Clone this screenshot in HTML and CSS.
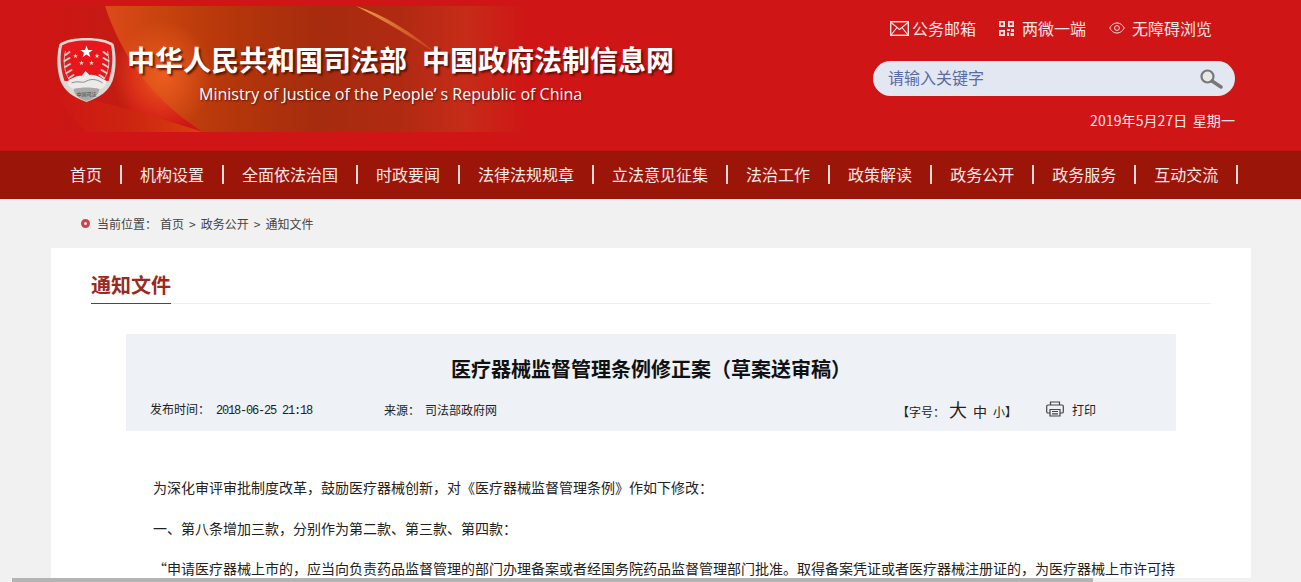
FILE: index.html
```html
<!DOCTYPE html>
<html lang="zh-CN">
<head>
    <meta charset="UTF-8">
    <meta name="viewport" content="width=device-width, initial-scale=1.0">
    <title>医疗器械监督管理条例修正案&#xFF08;草案送审稿&#xFF09;</title>
    <link rel="stylesheet" href="styles.css">
</head>
<body>
    <header class="top">
        <svg class="banner" viewBox="0 0 530 126" width="530" height="126" aria-hidden="true">
            <defs>
                <linearGradient id="bannerGlow" x1="0" x2="1" y1="0" y2="0">
                    <stop offset="0" stop-color="#dc4a1a"/>
                    <stop offset="0.12" stop-color="#c9440f"/>
                    <stop offset="0.3" stop-color="#b4360a"/>
                    <stop offset="0.5" stop-color="#a62c0e"/>
                    <stop offset="0.7" stop-color="#b02a12"/>
                    <stop offset="0.85" stop-color="#c62c18"/>
                    <stop offset="1" stop-color="#cf1515"/>
                </linearGradient>
                <linearGradient id="bannerLow" x1="0" x2="1" y1="0" y2="0">
                    <stop offset="0" stop-color="#cf1515"/>
                    <stop offset="0.5" stop-color="#cc2410"/>
                    <stop offset="1" stop-color="#d8400e"/>
                </linearGradient>
                <linearGradient id="bannerStreak" x1="0" x2="1" y1="0" y2="0">
                    <stop offset="0" stop-color="#eea04a"/>
                    <stop offset="1" stop-color="#c23416"/>
                </linearGradient>
                <radialGradient id="bannerHot" cx="0.5" cy="0.5" r="0.5">
                    <stop offset="0" stop-color="#ec5c1e"/>
                    <stop offset="1" stop-color="#ec5c1e" stop-opacity="0"/>
                </radialGradient>
                <linearGradient id="bannerLeft" x1="0" x2="1" y1="0" y2="0">
                    <stop offset="0" stop-color="#cf1515"/>
                    <stop offset="1" stop-color="#c21c12"/>
                </linearGradient>
            </defs>
            <rect width="90" height="126" fill="url(#bannerLeft)"/>
            <path d="M67 0C85 55 120 98 165 126H490V0Z" fill="url(#bannerGlow)"/>
            <ellipse cx="125" cy="70" rx="50" ry="55" fill="url(#bannerHot)"/>
            <path d="M10 84C60 94 115 110 165 126H48Z" fill="url(#bannerLow)"/>
            <path d="M318 0C345 8 372 25 402 50C375 32 345 14 318 0Z" fill="url(#bannerStreak)"/>
        </svg>

        <div class="brand">
            <svg class="emblem" viewBox="0 0 60 66" width="61" height="66" aria-hidden="true">
                <defs>
                    <polygon id="star" points="0,-5 1.2,-1.6 4.8,-1.6 1.9,.6 3,4 0,2 -3,4 -1.9,.6 -4.8,-1.6 -1.2,-1.6"/>
                </defs>
                <path d="M30 1C42 1 52 3 57 7C60 18 60 32 56 44C52 54 44 60 30 65C16 60 8 54 4 44C0 32 0 18 3 7C8 3 18 1 30 1Z" fill="#dcd8d4"/>
                <path d="M30 3.5C41 3.5 50 5.5 54.5 8.5C57 20 56 32 52 44H8C4 32 3 20 5.5 8.5C10 5.5 19 3.5 30 3.5Z" fill="#e8171c"/>
                <use href="#star" x="30" y="15" fill="#fff" transform="translate(-9 -4.5) scale(1.3)"/>
                <use href="#star" x="19" y="19" fill="#fbe9d0" transform="translate(9.5 9.5) scale(.5)"/>
                <use href="#star" x="81" y="19" fill="#fbe9d0" transform="translate(0 9.5) scale(.5)"/>
                <use href="#star" x="50" y="52" fill="#fbe9d0" transform="scale(.5)"/>
                <use href="#star" x="70" y="52" fill="#fbe9d0" transform="scale(.5)"/>
                <path d="M9 14C6 26 8 38 16 47" fill="none" stroke="#b9b9b0" stroke-width="1"/>
                <path d="M51 14C54 26 52 38 44 47" fill="none" stroke="#b9b9b0" stroke-width="1"/>
                <path d="M9 18L13 15M8 24L13 21M8.5 30L13.5 27M10 36L15 33M12.5 41L17 38M51 18L47 15M52 24L47 21M51.5 30L46.5 27M50 36L45 33M47.5 41L43 38" fill="none" stroke="#d2d2ca" stroke-width="2" stroke-linecap="round"/>
                <path d="M11 44C15 42 20 38 25 39L29 34L33 38C40 37 46 42 50 44C50 49 46 52 40 53H20C15 52 11 49 11 44Z" fill="#ecebea"/>
                <path d="M15 46C22 43 26 47 30 44C36 41 42 43 46 46" fill="none" stroke="#8a8a8a" stroke-width="1"/>
                <path d="M17 52C24 50 36 50 43 52C42 58 37 62 30 64C23 62 18 58 17 52Z" fill="#a9a9a6"/>
                <text x="30" y="58.5" class="emblem-text">中国司法</text>
            </svg>
            <div class="brand-text">
                <h1 class="brand-name"><span>中华人民共和国司法部</span><span>中国政府法制信息网</span></h1>
                <p class="brand-en">Ministry of Justice of the People’ s Republic of China</p>
            </div>
        </div>

        <div class="tools">
            <div class="tool-links">
                <a class="tool-mail">
                    <svg viewBox="0 0 19 15" width="19" height="15" aria-hidden="true">
                        <rect x="0.7" y="0.7" width="17.6" height="13.6" fill="none" stroke="#fbe6e6" stroke-width="1.4"/>
                        <path d="M1 1.5L9.5 8.5L18 1.5M1 14L7 6.5M18 14L12 6.5" fill="none" stroke="#fbe6e6" stroke-width="1.1"/>
                    </svg>
                    公务邮箱
                </a>
                <a class="tool-qr">
                    <svg viewBox="0 0 15 15" width="15" height="15" aria-hidden="true">
                        <path d="M0 0H6V6H0ZM1.7 1.7V4.3H4.3V1.7ZM9 0H15V6H9ZM10.7 1.7V4.3H13.3V1.7ZM0 9H6V15H0ZM1.7 10.7V13.3H4.3V10.7Z" fill="#fbe6e6" fill-rule="evenodd"/>
                        <path d="M8 8H11V10H8ZM12 8H15V11H12ZM8 11.5H10V15H8ZM11.5 12H15V15H11.5Z" fill="#fbe6e6"/>
                    </svg>
                    两微一端
                </a>
                <a class="tool-eye">
                    <svg viewBox="0 0 16 12" width="16" height="12" aria-hidden="true">
                        <path d="M0.7 6C3 2.2 5.4 1 8 1C10.6 1 13 2.2 15.3 6C13 9.8 10.6 11 8 11C5.4 11 3 9.8 0.7 6Z" fill="none" stroke="#fbe6e6" stroke-width="1"/>
                        <circle cx="8" cy="6" r="2.4" fill="none" stroke="#fbe6e6" stroke-width="1"/>
                    </svg>
                    无障碍浏览
                </a>
            </div>
            <div class="search">
                <span class="search-text">请输入关键字</span>
                <svg viewBox="0 0 24 20" width="24" height="20" aria-hidden="true">
                    <circle cx="8.5" cy="7.5" r="6" fill="#e8e8e4" stroke="#777" stroke-width="2.2"/>
                    <path d="M13 12L22 18" stroke="#777" stroke-width="3.4" stroke-linecap="round"/>
                </svg>
            </div>
            <div class="today">2019年5月27日 星期一</div>
        </div>
    </header>

    <nav class="nav">
        <a>首页</a>
        <a>机构设置</a>
        <a>全面依法治国</a>
        <a>时政要闻</a>
        <a>法律法规规章</a>
        <a>立法意见征集</a>
        <a>法治工作</a>
        <a>政策解读</a>
        <a>政务公开</a>
        <a>政务服务</a>
        <a>互动交流</a>
    </nav>

    <div class="crumbs">
        <i class="crumb-dot"></i>
        <span class="crumb-label">当前位置&#xFF1A;</span>
        <a>首页</a>
        <span class="crumb-sep">&gt;</span>
        <a>政务公开</a>
        <span class="crumb-sep">&gt;</span>
        <a>通知文件</a>
    </div>

    <main class="card">
        <div class="section-head">
            <h2>通知文件</h2>
        </div>

        <div class="doc-head">
            <h3>医疗器械监督管理条例修正案&#xFF08;草案送审稿&#xFF09;</h3>
            <div class="doc-meta">
                <span class="meta-time">发布时间&#xFF1A;<b>2018-06-25 21:18</b></span>
                <span>来源&#xFF1A;<span class="meta-source">司法部政府网</span></span>
                <div class="meta-tools">
                    <span class="font-size">【字号&#xFF1A;<a class="big">大</a><a class="mid">中</a><a class="small">小</a>】</span>
                    <a class="print">
                        <svg viewBox="0 0 18 16" width="18" height="16" aria-hidden="true">
                            <path d="M4.5 4V1H13.5V4" fill="none" stroke="#444" stroke-width="1.2"/>
                            <path d="M4 12H2C1.2 12 .7 11.5 .7 10.7V5.3C.7 4.5 1.2 4 2 4H16C16.8 4 17.3 4.5 17.3 5.3V10.7C17.3 11.5 16.8 12 16 12H14" fill="none" stroke="#444" stroke-width="1.2"/>
                            <path d="M4 8.5H14V15H4ZM6 10.5H12M6 12.8H12" fill="none" stroke="#444" stroke-width="1.2"/>
                        </svg>
                        打印
                    </a>
                </div>
            </div>
        </div>

        <article class="doc-body">
            <p>为深化审评审批制度改革&#xFF0C;鼓励医疗器械创新&#xFF0C;对《医疗器械监督管理条例》作如下修改&#xFF1A;</p>
            <p>一、第八条增加三款&#xFF0C;分别作为第二款、第三款、第四款&#xFF1A;</p>
            <p>“申请医疗器械上市的&#xFF0C;应当向负责药品监督管理的部门办理备案或者经国务院药品监督管理部门批准。取得备案凭证或者医疗器械注册证的&#xFF0C;为医疗器械上市许可持</p>
        </article>
    </main>

    <div class="hscroll"><div class="hscroll-thumb"></div></div>
</body>
</html>
```

FILE: styles.css
```css
* {
    box-sizing: border-box;
}

html, body {
    height: 582px;
    overflow: hidden;
}

body {
    margin: 0;
    background: #f1f1f1;
    color: #333;
    font-family: "Noto Sans CJK SC", "Liberation Sans", sans-serif;
}

h1, h2, h3, p {
    margin: 0;
}

/* header */
.top {
    position: relative;
    display: flex;
    justify-content: space-between;
    height: 150px;
    padding: 0 66px 0 56px;
    background: #cf1515;
}

.banner {
    position: absolute;
    left: 38px;
    top: 6px;
}

.brand {
    position: relative;
    display: flex;
    padding-top: 37px;
}

.emblem-text {
    font-size: 5px;
    fill: #444;
    text-anchor: middle;
}

.brand-text {
    margin-left: 10px;
}

.brand-name {
    display: flex;
    gap: 15px;
    height: 34px;
    margin-top: 5px;
    color: #fff;
    font-size: 28px;
    font-weight: 700;
    line-height: 34px;
    white-space: nowrap;
    text-shadow: 2px 2px 2px rgba(60, 10, 0, .75);
}

.brand-en {
    margin: 7px 0 0 72px;
    color: #fff;
    font-family: "Open Sans", sans-serif;
    font-size: 16px;
    line-height: 22px;
    white-space: nowrap;
    text-shadow: 1px 1px 2px rgba(60, 10, 0, .7);
}

.tools {
    position: relative;
    width: 362px;
}

.tool-links {
    display: flex;
    height: 61px;
    padding: 17px 0 0 17px;
    color: #fbe6e6;
    font-size: 16px;
    line-height: 22px;
}

.tool-links a {
    display: flex;
    align-items: center;
    height: 22px;
    white-space: nowrap;
}

.tool-mail svg { margin-right: 3px; }
.tool-qr { margin-left: 23px; }
.tool-qr svg { margin-right: 8px; }
.tool-eye { margin-left: 23px; }
.tool-eye svg { margin-right: 7px; }

.search {
    display: flex;
    align-items: center;
    justify-content: space-between;
    height: 35px;
    padding: 0 12px 0 15px;
    border-radius: 18px;
    background: #e2e7f2;
}

.search-text {
    color: #5a6ba6;
    font-size: 16px;
    line-height: 33px;
    margin-bottom: 2px;
}

.today {
    margin-top: 14px;
    color: #fbe6e6;
    font-size: 14px;
    line-height: 20px;
    text-align: right;
    word-spacing: 2px;
    letter-spacing: .1px;
}

/* nav */
.nav {
    display: flex;
    height: 49px;
    padding-left: 70px;
    padding-bottom: 1px;
    align-items: center;
    border-top: 1px solid #c5170f;
    background: #9c1509;
}

.nav a {
    height: 19px;
    margin-right: 18px;
    padding-right: 18px;
    border-right: 2px solid #f4d9d6;
    color: #f7eaea;
    font-size: 16px;
    line-height: 19px;
    white-space: nowrap;
}

/* breadcrumb */
.crumbs {
    display: flex;
    align-items: center;
    height: 49px;
    padding-left: 81px;
    padding-bottom: 1px;
    color: #444;
    font-size: 12px;
}

.crumb-dot {
    width: 9px;
    height: 9px;
    margin-right: 7px;
    border: 3px solid #c9444a;
    border-radius: 50%;
    background: #f6e4e4;
}

.crumb-label {
    margin-right: 3px;
}

.crumb-sep {
    margin: 0 5px;
}

/* content */
.card {
    height: 334px;
    margin: 0 50px 0 51px;
    padding: 0 40px;
    overflow: hidden;
    background: #fff;
}

.section-head {
    height: 56px;
    padding-top: 23px;
    border-bottom: 1px solid #eee;
}

.section-head h2 {
    display: inline-block;
    height: 33px;
    border-bottom: 1px solid #9a2a1e;
    color: #9a2a1e;
    font-size: 20px;
    font-weight: 700;
    line-height: 28px;
}

.doc-head {
    height: 97px;
    margin: 30px 35px 0;
    background: #eef1f6;
}

.doc-head h3 {
    padding-top: 21px;
    color: #111;
    font-size: 20px;
    font-weight: 700;
    line-height: 28px;
    text-align: center;
}

.doc-meta {
    display: flex;
    align-items: center;
    height: 22px;
    margin-top: 15px;
    padding: 0 80px 0 24px;
    color: #222;
    font-size: 12px;
}

.meta-time {
    width: 234px;
}

.meta-time b {
    margin-left: 6px;
    font-family: "Liberation Mono", monospace;
    font-weight: 400;
    letter-spacing: -1.2px;
}

.meta-source {
    margin-left: 5px;
}

.meta-tools {
    display: flex;
    align-items: center;
    margin-left: auto;
}

.font-size a {
    margin-right: 6px;
}

.font-size .big {
    font-size: 18px;
    margin-left: 4px;
}

.mid { font-size: 14px; }
.font-size .small { font-size: 12px; margin-right: 0; }

.print {
    display: flex;
    align-items: center;
    margin-left: 29px;
}

.print svg {
    margin-right: 8px;
}

.doc-body {
    margin: 44px 30px 0 62px;
    color: #222;
    font-size: 14px;
    line-height: 24px;
}

.doc-body p {
    margin-bottom: 16.5px;
    white-space: nowrap;
}

/* page scrollbar */
.hscroll {
    position: fixed;
    left: 0;
    right: 0;
    bottom: 0;
    height: 4px;
    background: #f1f1f1;
}

.hscroll-thumb {
    width: 1081px;
    height: 4px;
    margin-left: 12px;
    background: #b4b4b4;
}
```
